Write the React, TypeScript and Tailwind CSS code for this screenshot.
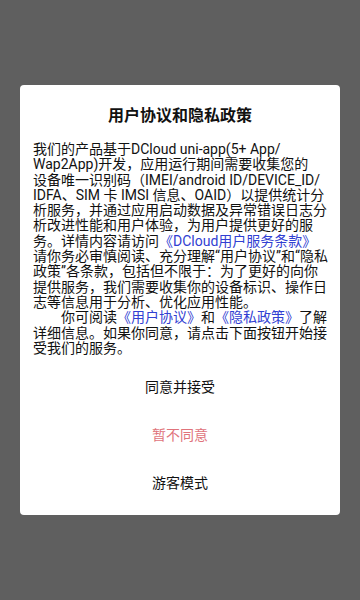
import type React from "react";

const linkClass = "text-[#3140d2]";

const lines: React.ReactNode[] = [
  "我们的产品基于DCloud uni-app(5+ App/",
  "Wap2App)开发，应用运行期间需要收集您的",
  "设备唯一识别码（IMEI/android ID/DEVICE_ID/",
  "IDFA、SIM 卡 IMSI 信息、OAID）以提供统计分",
  "析服务，并通过应用启动数据及异常错误日志分",
  "析改进性能和用户体验，为用户提供更好的服",
  <>
    务。详情内容请访问<span className={linkClass}>《DCloud用户服务条款》</span>
  </>,
  "请你务必审慎阅读、充分理解\u201c用户协议\u201d和\u201c隐私",
  "政策\u201d各条款，包括但不限于：为了更好的向你",
  "提供服务，我们需要收集你的设备标识、操作日",
  "志等信息用于分析、优化应用性能。",
  <>
    <span className="inline-block w-[28px]" />
    你可阅读<span className={linkClass}>《用户协议》</span>和
    <span className={linkClass}>《隐私政策》</span>了解
  </>,
  "详细信息。如果你同意，请点击下面按钮开始接",
  "受我们的服务。",
];

export default function App() {
  return (
    <div
      className="h-[600px] w-[360px] bg-[#5f5f5f] px-[20px] pt-[85px]"
      style={{ fontFamily: 'Roboto, "Noto Sans CJK SC", sans-serif' }}
    >
      <div className="flex h-[430px] flex-col rounded-[4px] bg-white">
        <h1 className="pt-[21px] text-center text-[16px] font-bold leading-[20px] text-[#111]">
          用户协议和隐私政策
        </h1>
        <div className="mt-[16px] px-[13px] text-[14px] leading-[15.3px] text-[#111]">
          {lines.map((l, i) => (
            <div key={i} className="whitespace-nowrap">
              {l}
            </div>
          ))}
        </div>
        <div className="mt-[7px] flex flex-col">
          <button className="h-[48px] text-[14px] text-[#111]">同意并接受</button>
          <button className="h-[48px] text-[14px] text-[#e0737b]">暂不同意</button>
          <button className="h-[48px] text-[14px] text-[#111]">游客模式</button>
        </div>
      </div>
    </div>
  );
}
